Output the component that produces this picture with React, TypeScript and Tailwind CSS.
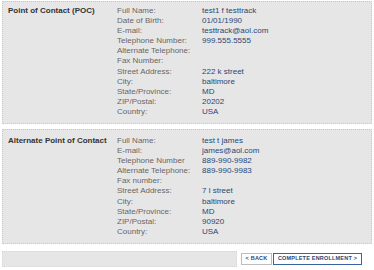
import React from 'react'

type Row = [string, string]

const poc: Row[] = [
  ['Full Name:', 'test1 f testtrack'],
  ['Date of Birth:', '01/01/1990'],
  ['E-mail:', 'testtrack@aol.com'],
  ['Telephone Number:', '999.555.5555'],
  ['Alternate Telephone:', ''],
  ['Fax Number:', ''],
  ['Street Address:', '222 k street'],
  ['City:', 'baltimore'],
  ['State/Province:', 'MD'],
  ['ZIP/Postal:', '20202'],
  ['Country:', 'USA'],
]

const alt: Row[] = [
  ['Full Name:', 'test t james'],
  ['E-mail:', 'james@aol.com'],
  ['Telephone Number', '889-990-9982'],
  ['Alternate Telephone:', '889-990-9983'],
  ['Fax number:', ''],
  ['Street Address:', '7 l street'],
  ['City:', 'baltimore'],
  ['State/Province:', 'MD'],
  ['ZIP/Postal:', '90920'],
  ['Country:', 'USA'],
]

function Section({ title, rows, className }: { title: string; rows: Row[]; className: string }) {
  return (
    <div className={`flex border border-dotted border-[#c8c8c8] bg-[#e6e6e6] pl-[5px] ${className}`}>
      <div className="w-[109px] font-bold text-[#333]">{title}</div>
      <div className="flex flex-col">
        {rows.map(([label, value]) => (
          <div key={label} className="flex h-[10.1px]">
            <div className="w-[85px] text-[#666]">{label}</div>
            <div className="text-[#2b4775]">{value}</div>
          </div>
        ))}
      </div>
    </div>
  )
}

export default function App() {
  return (
    <div className="w-[374px] h-[270px] bg-white px-[2px] pt-[1px] text-[8px] leading-[10px] font-['Liberation_Sans',Arial,sans-serif] overflow-hidden">
      <Section title="Point of Contact (POC)" rows={poc} className="h-[123px] pt-[4px]" />
      <Section title="Alternate Point of Contact" rows={alt} className="mt-[5px] h-[115px] pt-[6px]" />
      <div className="mt-[7px] flex items-center">
        <div className="h-[16px] w-[235px] border border-dotted border-[#d8d8d8] bg-[#e6e6e6]" />
        <div className="ml-[4px] flex gap-[1px]">
          <button className="flex h-[12px] w-[31px] items-center justify-center whitespace-nowrap border border-[#bdbdbd] bg-white text-[5.5px] font-bold tracking-[0.2px] text-[#2b4775] leading-none">
            &lt; BACK
          </button>
          <button className="flex h-[12px] w-[89px] items-center justify-center whitespace-nowrap border border-[#3a63a0] bg-white text-[5.5px] font-bold tracking-[0.2px] text-[#2b4775] leading-none">
            COMPLETE ENROLLMENT &gt;
          </button>
        </div>
      </div>
    </div>
  )
}
